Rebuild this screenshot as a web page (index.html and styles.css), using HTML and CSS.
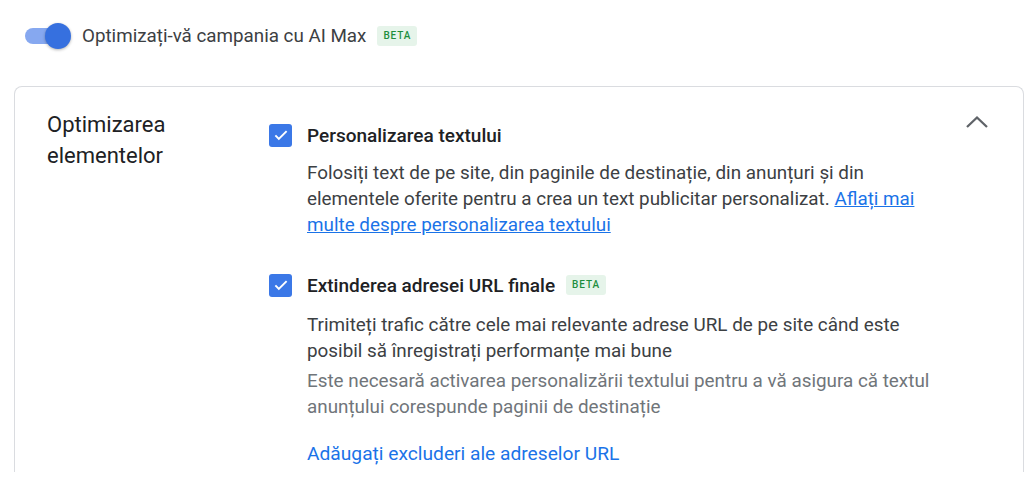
FILE: index.html
```html
<!DOCTYPE html>
<html lang="ro">

<head>
    <meta charset="UTF-8" />
    <meta name="viewport" content="width=device-width, initial-scale=1.0" />
    <title>AI Max</title>

    <link rel="stylesheet" href="styles.css">

</head>

<body>
    <div class="ai-toggle">
        <span class="switch" role="switch" aria-checked="true">
            <span class="switch-track"></span>
            <span class="switch-thumb"></span>
        </span>
        <span class="ai-toggle-label">Optimizați-vă campania cu AI Max</span>
        <span class="badge">BETA</span>
    </div>

    <section class="panel">
        <h2 class="panel-title">Optimizarea elementelor</h2>

        <div class="panel-body">
            <!-- Text customization -->
            <div class="option">
                <div class="option-head">
                    <span class="checkbox">
                        <svg viewBox="0 0 24 24" width="18" height="18">
                            <path d="M4.5 12.5l4.6 4.6L19.5 6.8" fill="none" stroke="#fff" stroke-width="2.6" />
                        </svg>
                    </span>
                    <span class="option-name">Personalizarea textului</span>
                </div>
                <p class="option-desc">
                    Folosiți text de pe site, din paginile de destinație, din anunțuri și din
                    elementele oferite pentru a crea un text publicitar personalizat.
                    <a href="#" class="inline-link">Aflați mai multe despre personalizarea textului</a>
                </p>
            </div>

            <!-- Final URL expansion -->
            <div class="option option-url">
                <div class="option-head">
                    <span class="checkbox">
                        <svg viewBox="0 0 24 24" width="18" height="18">
                            <path d="M4.5 12.5l4.6 4.6L19.5 6.8" fill="none" stroke="#fff" stroke-width="2.6" />
                        </svg>
                    </span>
                    <span class="option-name">Extinderea adresei URL finale</span>
                    <span class="badge">BETA</span>
                </div>
                <p class="option-desc">
                    Trimiteți trafic către cele mai relevante adrese URL de pe site când este
                    posibil să înregistrați performanțe mai bune
                </p>
                <p class="option-note">
                    Este necesară activarea personalizării textului pentru a vă asigura că textul
                    anunțului corespunde paginii de destinație
                </p>
                <a href="#" class="action-link">Adăugați excluderi ale adreselor URL</a>
            </div>
        </div>

        <button class="collapse-btn" aria-label="Restrângeți">
            <svg viewBox="0 0 24 14" width="24" height="14">
                <path d="M2 12L12 2.5 22 12" fill="none" stroke="#5f6368" stroke-width="2.3" />
            </svg>
        </button>
    </section>
</body>

</html>
```

FILE: styles.css
```css
html,
body {
    height: 100%;
    margin: 0;
    padding: 0;
}

body {
    font-family: Roboto, "Liberation Sans", Arial, sans-serif;
    color: #3c4043;
    background: #fff;
}

/* top switch row */
.ai-toggle {
    display: flex;
    align-items: center;
    height: 26px;
    padding: 23px 0 0 25px;
}

.switch {
    position: relative;
    width: 46px;
    height: 26px;
    flex: none;
}

.switch-track {
    position: absolute;
    left: 0;
    top: 5px;
    width: 45px;
    height: 16px;
    border-radius: 8px;
    background: #86a8f0;
}

.switch-thumb {
    position: absolute;
    right: 0;
    top: 0;
    width: 26px;
    height: 26px;
    border-radius: 50%;
    background: #3670df;
    box-shadow: 0 1px 3px rgba(0, 0, 0, 0.3);
}

.ai-toggle-label {
    margin-left: 11px;
    font-size: 18.8px;
    color: #3c4043;
}

.badge {
    display: inline-block;
    margin-left: 11px;
    padding: 0 6px;
    height: 20px;
    line-height: 20px;
    border-radius: 3px;
    background: #e6f4ea;
    color: #1e8e3e;
    font-size: 10px;
    font-weight: 500;
    letter-spacing: 0.9px;
}

/* settings card */
.panel {
    display: grid;
    grid-template-columns: 222px 1fr auto;
    margin: 37px 0 0 14px;
    padding: 22px 34px 0 32px;
    min-height: 386px;
    box-sizing: border-box;
    border: 1px solid #dadce0;
    border-bottom: none;
    border-radius: 8px 8px 0 0;
}

.panel-title {
    margin: 0;
    font-size: 22px;
    font-weight: 400;
    line-height: 31px;
    color: #202124;
    width: 170px;
}

.panel-body {
    padding-top: 14px;
    max-width: 678px;
}

.option-head {
    display: flex;
    align-items: center;
    height: 24px;
}

.checkbox {
    display: flex;
    align-items: center;
    justify-content: center;
    width: 23px;
    height: 23px;
    border-radius: 3px;
    background: #3b78e7;
    flex: none;
}

.option-name {
    margin-left: 15px;
    font-size: 19px;
    font-weight: 500;
    color: #202124;
}

.option-desc {
    margin: 13px 0 0 38px;
    font-size: 18.85px;
    line-height: 26px;
    color: #3c4043;
}

.option-note {
    margin: 4px 0 0 38px;
    font-size: 18.85px;
    line-height: 26px;
    color: #70757a;
}

.inline-link {
    color: #1a73e8;
}

.option-url {
    margin-top: 35px;
}

.option-url .option-desc {
    margin-top: 15px;
}

.action-link {
    display: block;
    margin: 21px 0 0 38px;
    font-size: 19.2px;
    line-height: 26px;
    color: #1a73e8;
    text-decoration: none;
}

.collapse-btn {
    align-self: start;
    margin-top: 6px;
    padding: 0;
    border: none;
    background: none;
}
```
